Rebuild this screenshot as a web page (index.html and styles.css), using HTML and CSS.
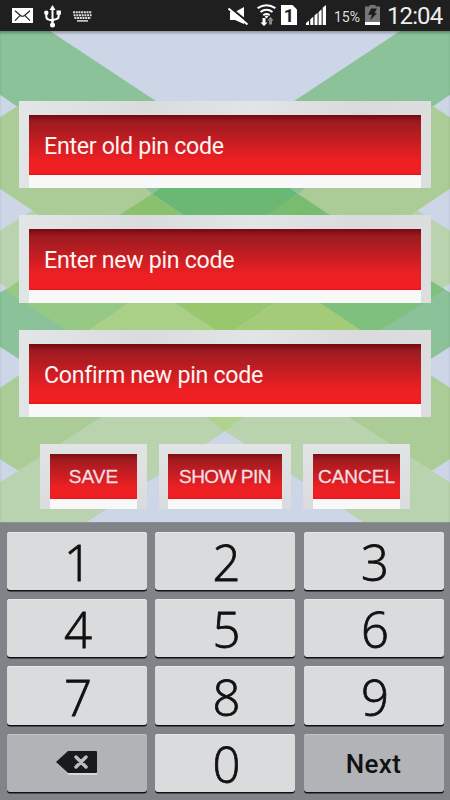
FILE: index.html
```html
<!DOCTYPE html>
<html lang="en">

<head>
    <meta charset="UTF-8">
    <meta name="viewport" content="width=device-width, initial-scale=1.0">
    <title>Change pin code</title>
    <link rel="stylesheet" href="styles.css">
</head>

<body>

    <header class="status-bar">
        <div class="status-left">
            <svg class="icon-mail" width="21" height="15" viewBox="0 0 21 15">
                <path fill="#fff" d="M0 0h21v15H0z"/>
                <path fill="none" stroke="#222" stroke-width="1.2" d="M3 2.800l5.500 4.700q2 1.500 4 0L18 2.800M3 12.600l5-5M18 12.600l-5-5"/>
            </svg>
            <svg class="icon-usb" width="17" height="23" viewBox="0 0 17 23">
                <g fill="none" stroke="#fff" stroke-width="2">
                    <path d="M8.500 3v17M2.300 9v2.500q0 3 3 3.200 3.200.1 3.200 3M14.700 8v3q0 3-3 3.200-3.200.1-3.200 3"/>
                </g>
                <path fill="#fff" d="M8.500 0l3 5h-6z"/>
                <circle cx="8.500" cy="20" r="2.500" fill="#fff"/>
                <circle cx="2.300" cy="7.800" r="2.200" fill="#fff"/>
                <path fill="#fff" d="M12.500 5.500h4.400v4.200h-4.400z"/>
            </svg>
            <svg class="icon-keyboard" width="19" height="11" viewBox="0 0 19 11">
                <g fill="none" stroke="#ddd" stroke-width="2" stroke-dasharray="2 .7">
                    <path d="M0 1.200h19M.6 4.200h18M1.400 7.100h16.500"/>
                </g>
                <path stroke="#ddd" stroke-width="1.500" d="M4 9.900h11"/>
            </svg>
        </div>
        <div class="status-right">
            <svg class="icon-mute" width="21" height="19" viewBox="0 0 21 19">
                <path fill="#fff" d="M2 5h5l9-5v17L7 13H2z"/>
                <path stroke="#1f1f1f" stroke-width="2.200" d="M1.500 0l19 15.500"/>
                <path stroke="#fff" stroke-width="2" d="M.5 1.500l19 16"/>
            </svg>
            <svg class="icon-wifi" width="19" height="23" viewBox="0 0 19 23">
                <g fill="none" stroke="#fff" stroke-width="2">
                    <path d="M.6 4.200Q9.500-1.800 18.400 4.200M3.500 8q6-4.500 12 0M6.300 11.200q3.200-2.300 6.400 0"/>
                </g>
                <path fill="#fff" d="M7.600 12.500l1.900-1 1.900 1-1.900 2zM5.500 14h3v4.500h2L7 22l-3.500-3.500h2z"/>
                <path fill="#888" d="M12 20.500V16.500h-1.800l3.300-3.800 3.300 3.800H15v4z"/>
            </svg>
            <div class="sim-card">1</div>
            <svg class="icon-signal" width="20" height="20" viewBox="0 0 20 20">
                <path fill="#fff" d="M0 20v-2l3-2.500V20zM4.300 20v-5.800l3-2.500V20zM8.500 20V10.500l3-2.700V20zM12.600 20V6.900l3-2.600V20zM16.700 20V2.700L20 0v20z"/>
            </svg>
            <span class="battery-level">15%</span>
            <svg class="icon-battery" width="15" height="20" viewBox="0 0 15 20">
                <path fill="#777" d="M4.500 0h6v1.500H15V20H0V1.500h4.500z"/>
                <path fill="#fff" d="M0 17h15v3H0z"/>
                <path fill="#1c1c1c" d="M6 3.500h6L9.500 8H12L5 15.500l2-5.700H3.200z"/>
            </svg>
            <span class="clock">12:04</span>
        </div>
    </header>

    <main class="pin-screen">
        <svg class="backdrop" viewBox="0 31 450 492" preserveAspectRatio="none">
            <!-- top corners -->
            <path fill="#8bc29a" d="M0 31h50L157 102v6H19L0 95zM450 31h-50L293 102v6h138l19-13z"/>
            <!-- side bands -->
            <path fill="#abcc96" d="M0 117.500L18 106H60V216H40L0 189zM450 117.500L432 106H390V216H410L450 189z"/>
            <path fill="#b9d3af" d="M0 231l33-20.500 20 13V300H24L0 284zM450 231l-33-20.500-20 13V300h29l24-16z"/>
            <!-- first gap -->
            <path fill="#abcc96" d="M33 185H165L118 217H41L33 211zM417 185H285l46 32h78l8-6z"/>
            <path fill="#89c16f" d="M152 194l33 23h-68z"/>
            <path fill="#78bc70" d="M298 194l-34 23h68z"/>
            <path fill="#6bb874" d="M160 188h130l8 6-33 23h-80l-33-23z"/>
            <path fill="#8bc29a" d="M145 188h15l-8 6zM290 188h16l-8 6z"/>
            <!-- second gap -->
            <path fill="#8bc29a" d="M0 293l7-4 62 42v30H21L0 347.500zM450 293l-7-4-64 42v30h50l21-13.500z"/>
            <path fill="#96c983" d="M19 281.500L5 291l63 40h21l42-29H30z"/>
            <path fill="#a9d086" d="M131 302h43l42 29H89z"/>
            <path fill="#98c76e" d="M173 302h104l-43 29h-18z"/>
            <path fill="#a3cb78" d="M277 302h42l42 29H234z"/>
            <path fill="#80c07e" d="M318 302h102l11-5V281.500L445 290l-65 41h-19z"/>
            <!-- lower part -->
            <path fill="#abcc96" d="M0 388.500l19-12.500h110v45L18 471.500 0 460zM450 388.500L431 376H321v45l111 50.500 18-11.500z"/>
            <path fill="#b9d3af" d="M0 483.500L104 416h242l104 67.500V523H363L225 432 87 523H0z"/>
            <path fill="#b0d28f" d="M204 416h42l-21 16z"/>
        </svg>

        <form class="pin-form">
            <div class="field"><input type="text" placeholder="Enter old pin code"></div>
            <div class="field"><input type="text" placeholder="Enter new pin code"></div>
            <div class="field"><input type="text" placeholder="Confirm new pin code"></div>

            <div class="actions">
                <button type="button" class="action"><span>SAVE</span></button>
                <button type="button" class="action action-wide"><span>SHOW PIN</span></button>
                <button type="button" class="action"><span>CANCEL</span></button>
            </div>
        </form>
    </main>

    <div class="keypad">
        <button class="key">1</button>
        <button class="key">2</button>
        <button class="key">3</button>
        <button class="key">4</button>
        <button class="key">5</button>
        <button class="key">6</button>
        <button class="key">7</button>
        <button class="key">8</button>
        <button class="key">9</button>
        <button class="key key-dark" aria-label="Delete">
            <svg width="42" height="25" viewBox="0 0 42 25">
                <path fill="#d8d9db" d="M1 13L13 2.500h28V25H13z"/>
                <path fill="#191a1b" d="M0 12L12 1h28q1 0 1 1v20q0 1-1 1H12z"/>
                <path fill="none" stroke="#bbbcc0" stroke-width="3.500" stroke-linecap="round" d="M20 7l10 10M30 7L20 17"/>
            </svg>
        </button>
        <button class="key">0</button>
        <button class="key key-dark key-next">Next</button>
    </div>

</body>

</html>
```

FILE: styles.css
```css
* {
    box-sizing: border-box;
}

body {
    margin: 0;
    width: 450px;
    height: 800px;
    display: flex;
    flex-direction: column;
    overflow: hidden;
    font-family: Roboto, sans-serif;
    background-color: #ccd6e6;
}

svg {
    display: block;
}

/* Status bar */
.status-bar {
    height: 31px;
    flex: none;
    display: flex;
    justify-content: space-between;
    align-items: flex-start;
    padding: 0 7px 0 12px;
    background-color: #1f1f1f;
    color: #fff;
}

.status-left,
.status-right {
    display: flex;
    align-items: flex-start;
}

.icon-mail {
    margin-top: 8px;
}

.icon-usb {
    margin: 5px 0 0 11px;
}

.icon-keyboard {
    margin: 11px 0 0 12px;
}

.icon-mute {
    margin-top: 7px;
}

.icon-wifi {
    margin: 4px 0 0 8px;
}

.sim-card {
    width: 16px;
    height: 20px;
    margin: 5px 0 0 5px;
    background-color: #fff;
    color: #1f1f1f;
    clip-path: polygon(0 0, 72% 0, 100% 22%, 100% 100%, 0 100%);
    font-size: 18px;
    font-weight: 700;
    line-height: 22px;
    text-align: center;
}

.icon-signal {
    margin: 5px 0 0 9px;
}

.battery-level {
    margin: 8px 0 0 8px;
    width: 27px;
    font-size: 14px;
    line-height: 18px;
    color: #ddd;
}

.icon-battery {
    margin: 5px 0 0 4px;
}

.clock {
    width: 56px;
    margin-left: 7px;
    font-size: 24px;
    line-height: 32px;
    letter-spacing: -0.9px;
    white-space: nowrap;
    color: #eee;
}

/* Pin form */
.pin-screen {
    position: relative;
    height: 491px;
    flex: none;
    box-shadow: inset 0 3px 3px -1px rgba(0, 0, 0, 0.3);
}

.backdrop {
    position: absolute;
    inset: 0;
    width: 100%;
    height: 100%;
    z-index: -1;
}

.pin-form {
    display: flex;
    flex-direction: column;
    gap: 27px;
    padding: 70px 19px 0;
}

.field {
    height: 87.3px;
    padding: 14px 10px 0;
    background: linear-gradient(100deg, #e3e6e6, #d9dbdd 30%, #e2e5e5 55%, #d9dadc 80%, #dddee0);
}

.field input {
    display: block;
    width: 100%;
    height: 73.3px;
    margin: 0;
    padding: 2px 15px 0;
    border: 0;
    border-bottom: 13.3px solid #f8f8f8;
    border-radius: 0;
    outline: none;
    font: 23.2px Roboto, sans-serif;
    letter-spacing: -0.3px;
    color: #fff;
    background: linear-gradient(#750910, #9c1b20 12%, #ee2024 76%, #f01f22 97%, #e8101a);
    background-clip: padding-box;
}

.field input::placeholder {
    color: #fff4f4;
    opacity: 1;
}

.actions {
    display: flex;
    justify-content: center;
    gap: 12px;
}

.action {
    width: 107px;
    height: 65px;
    padding: 10px 10px 0;
    border: 0;
    background: linear-gradient(#e1e4e5, #dadbdd);
}

.action-wide {
    width: 132px;
    padding: 10px 9px 0;
}

.action span {
    display: block;
    height: 55px;
    border-bottom: 10.5px solid #f8f8f8;
    font: 19px/45px "Liberation Sans", Arial, sans-serif;
    white-space: nowrap;
    color: #f4dfe0;
    -webkit-text-stroke: 0.3px #f4dfe0;
    background: linear-gradient(#7d0d13, #a31b20 14%, #ec2024 74%, #ee1f22 97%, #e8101a);
    background-clip: padding-box;
}

.action-wide span {
    letter-spacing: -0.5px;
}

/* Keypad */
.keypad {
    flex: 1;
    display: grid;
    grid-template-columns: repeat(3, 140px);
    grid-auto-rows: 58.5px;
    gap: 8.9px 8.5px;
    justify-content: center;
    padding-top: 8.5px;
    background-color: #808388;
    border-top: 1px solid #8c9093;
}

.key {
    display: flex;
    align-items: center;
    justify-content: center;
    padding: 0;
    border: 0;
    border-radius: 3px;
    background-color: #dadbdd;
    box-shadow: 0 1.5px 0 #111, inset 0 1px 0 #e8e9ea;
    font: 300 49px/58px "Open Sans", "Noto Sans", sans-serif;
    -webkit-text-stroke: 0.8px #111;
    color: #111;
    padding: 2px 0 0 3px;
}

.key-dark {
    padding: 0;
    background-color: #b2b3b7;
    box-shadow: 0 1.5px 0 #111, inset 0 1px 0 #c3c4c7;
}

.key-next {
    font: 500 26px/58px Roboto, sans-serif;
    letter-spacing: 0.4px;
    -webkit-text-stroke: 0;
    padding-top: 2px;
}
```
